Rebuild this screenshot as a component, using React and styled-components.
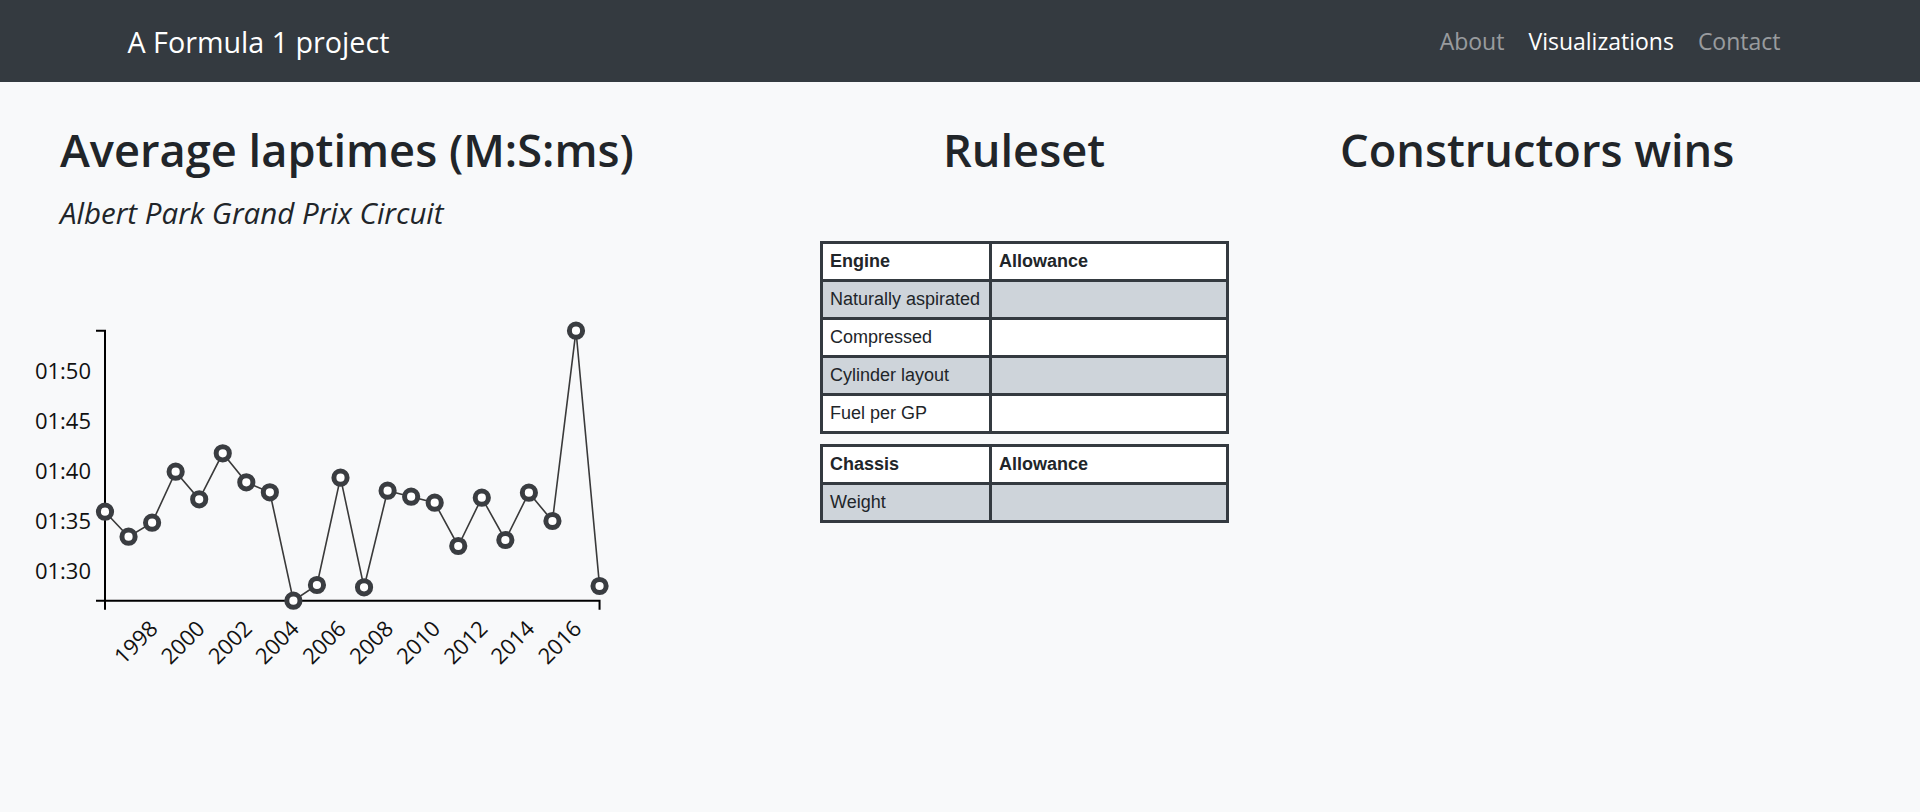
import React from 'react';
import styled, { createGlobalStyle } from 'styled-components';

const GlobalStyle = createGlobalStyle`
    body {
        margin: 0;
        background: #f8f9fa;
        color: #212529;
        font-family: "Open Sans", "Noto Sans", sans-serif;
    }
`

const NavBar = styled.nav`
    height: 82px;
    background: #343a40;
`

const NavInner = styled.div`
    width: 1710px;
    height: 100%;
    margin: 0 auto;
    padding: 0 22.5px;
    box-sizing: border-box;
    display: flex;
    align-items: center;
    justify-content: space-between;
`

const Brand = styled.a`
    font-size: 28.7px;
    color: #ffffff;
    text-decoration: none;
    line-height: 1.2;
    padding-top: 2px;
`

const NavLinks = styled.div`
    display: flex;
`

const NavLink = styled.a`
    padding: 0 12px;
    font-size: 23px;
    line-height: 1.5;
    text-decoration: none;
    color: ${props => props.$active ? '#ffffff' : 'rgba(255, 255, 255, 0.5)'};
`

const Main = styled.main`
    display: grid;
    grid-template-columns: 768px 512px 640px;
    padding-top: 41px;
`

const Column = styled.section`
    display: flex;
    flex-direction: column;
`

const Title = styled.h1`
    margin: 0;
    padding-left: ${props => props.$center ? 0 : 60}px;
    text-align: ${props => props.$center ? 'center' : 'left'};
    font-size: 45.2px;
    font-weight: 600;
    line-height: 54px;
`

const Subtitle = styled.h4`
    margin: 21px 0 12px;
    padding-left: 60px;
    font-size: 29.5px;
    font-style: italic;
    font-weight: 400;
    line-height: 30px;
`

const ChartSvg = styled.svg`
    display: block;
    font-family: "Open Sans", sans-serif;
`

const Tables = styled.div`
    margin-top: 64px;
    display: flex;
    flex-direction: column;
    align-items: center;
    gap: 10px;
`

const RuleTable = styled.table`
    width: 409px;
    table-layout: fixed;
    border-collapse: separate;
    border-spacing: 0;
    border-top: 3px solid #343a40;
    border-left: 3px solid #343a40;
    font-family: "Liberation Sans", Arial, sans-serif;
    font-size: 18px;
    color: #212529;
`

const KeyCol = styled.col`
    width: 169px;
`

const Row = styled.tr`
    background: ${props => props.$shade ? '#ced4da' : '#ffffff'};
`

const Cell = styled.td`
    height: 35px;
    padding: 0 7.5px;
    border-right: 3px solid #343a40;
    border-bottom: 3px solid #343a40;
    text-align: left;
    vertical-align: middle;
    font-weight: ${props => props.$head ? 700 : 400};
    white-space: nowrap;
`

// average lap time per season, seconds
const laps = [96.0, 93.5, 94.9, 100.0, 97.24, 101.84, 98.94, 97.94, 87.1, 88.67, 99.4,
    88.44, 98.1, 97.5, 96.9, 92.57, 97.4, 93.17, 97.9, 95.07, 114.1, 88.57];

const TOP = 240;
const x = i => 105 + i * 23.55;
const y = v => 600.7 - (v - 87.1) * 10 - TOP;
const fmt = v => `0${Math.floor(v / 60)}:${String(v % 60).padStart(2, '0')}`;

function LapChart() {
    const line = laps.map((v, i) => `${i ? 'L' : 'M'}${x(i)},${y(v)}`).join(' ');
    const years = [1998, 2000, 2002, 2004, 2006, 2008, 2010, 2012, 2014, 2016];
    const yb = y(87.1);
    const yt = y(114.1);

    return (
        <ChartSvg width="640" height="440" viewBox="0 0 640 440">
            <path d={`M96,${yt}H105V${yb}H96`} fill="none" stroke="#000" strokeWidth="2"/>
            <path d={`M105,${yb + 9}V${yb}H${x(21)}V${yb + 9}`} fill="none" stroke="#000" strokeWidth="2"/>
            {[90, 95, 100, 105, 110].map(v => (
                <text key={v} x="91" y={y(v)} dy="0.35em" textAnchor="end" fontSize="22" fill="#111">{fmt(v)}</text>
            ))}
            {years.map(yr => (
                <text key={yr} transform={`translate(${x(yr - 1996) + 7},${630 - TOP}) rotate(-45)`}
                    textAnchor="end" fontSize="22" fill="#111">{yr}</text>
            ))}
            <path d={line} fill="none" stroke="#3a3a3a" strokeWidth="1.6"/>
            {laps.map((v, i) => (
                <circle key={i} cx={x(i)} cy={y(v)} r="6.6" fill="#fff" stroke="#3a3d41" strokeWidth="5"/>
            ))}
        </ChartSvg>
    );
}

function Ruleset({ title, rows }) {
    return (
        <RuleTable>
            <colgroup>
                <KeyCol/>
                <col/>
            </colgroup>
            <tbody>
                <Row>
                    <Cell $head>{title}</Cell>
                    <Cell $head>Allowance</Cell>
                </Row>
                {rows.map((r, i) => (
                    <Row key={r} $shade={i % 2 === 0}>
                        <Cell>{r}</Cell>
                        <Cell/>
                    </Row>
                ))}
            </tbody>
        </RuleTable>
    );
}

export default function App() {
    return (
        <>
            <GlobalStyle/>
            <NavBar>
                <NavInner>
                    <Brand href="#">A Formula 1 project</Brand>
                    <NavLinks>
                        <NavLink href="#">About</NavLink>
                        <NavLink href="#" $active>Visualizations</NavLink>
                        <NavLink href="#">Contact</NavLink>
                    </NavLinks>
                </NavInner>
            </NavBar>
            <Main>
                <Column>
                    <Title>Average laptimes (M:S:ms)</Title>
                    <Subtitle>Albert Park Grand Prix Circuit</Subtitle>
                    <LapChart/>
                </Column>
                <Column>
                    <Title $center>Ruleset</Title>
                    <Tables>
                        <Ruleset title="Engine" rows={['Naturally aspirated', 'Compressed', 'Cylinder layout', 'Fuel per GP']}/>
                        <Ruleset title="Chassis" rows={['Weight']}/>
                    </Tables>
                </Column>
                <Column>
                    <Title>Constructors wins</Title>
                </Column>
            </Main>
        </>
    );
}
